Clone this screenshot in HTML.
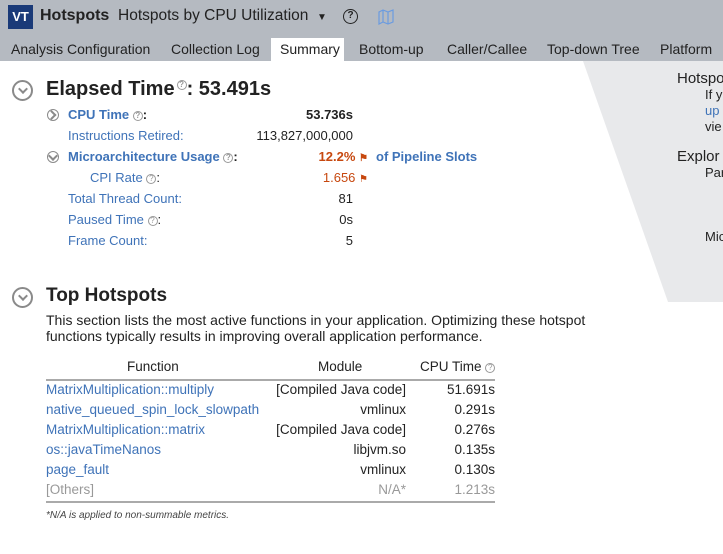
<!DOCTYPE html><html><head><meta charset="utf-8"><style>
*{margin:0;padding:0;box-sizing:border-box}
body{width:723px;height:554px;overflow:hidden;background:#fff;font-family:"Liberation Sans",sans-serif;color:#222;position:relative;font-size:13px}
.a{position:absolute;white-space:nowrap}
.l{color:#3f73b8}
.r{text-align:right}
.q{display:inline-block;width:10px;height:10px;border:1px solid #999;border-radius:50%;font-size:8px;line-height:8px;text-align:center;color:#999;vertical-align:1px}
.c{position:absolute;border:2px solid #8a8a8a;border-radius:50%}
.c:after{content:"";position:absolute;left:50%;top:40%;width:5px;height:5px;border-right:2px solid #8a8a8a;border-bottom:2px solid #8a8a8a;transform:translate(-50%,-50%) rotate(45deg)}
.cr:after{transform:translate(-70%,-50%) rotate(-45deg);top:50%}
.o{color:#c7480f}
.t{font-size:13.5px}
</style></head><body>
<div class="a" style="left:0;top:0;width:723px;height:61px;background:#b5bac1"></div>
<div class="a" style="left:8px;top:5px;width:25px;height:24px;background:#1a3a78;color:#fff;font-weight:bold;font-size:13px;line-height:24px;text-align:center">VT</div>
<div class="a" style="left:40px;top:7px;font-size:16px;font-weight:bold">Hotspots</div>
<div class="a" style="left:118px;top:7px;font-size:15.5px">Hotspots by CPU Utilization &nbsp;<span style="font-size:10px">▼</span></div>
<div class="a" style="left:343px;top:9px;width:15px;height:15px;border:1.5px solid #222;border-radius:50%;font-size:10px;line-height:12px;text-align:center;font-weight:bold">?</div>
<svg class="a" style="left:378px;top:9px" width="16" height="16"><path d="M1 3 L5 1 L10 3 L15 1 L15 13 L10 15 L5 13 L1 15 Z M5 1 V13 M10 3 V15" fill="none" stroke="#6a9be0" stroke-width="1.2"/></svg>
<div class="a" style="left:271px;top:38px;width:73px;height:23px;background:#fff"></div>
<div class="a" style="left:11px;top:41px;font-size:14px">Analysis Configuration</div>
<div class="a" style="left:171px;top:41px;font-size:14px">Collection Log</div>
<div class="a" style="left:280px;top:41px;font-size:14px">Summary</div>
<div class="a" style="left:359px;top:41px;font-size:14px">Bottom-up</div>
<div class="a" style="left:447px;top:41px;font-size:14px">Caller/Callee</div>
<div class="a" style="left:547px;top:41px;font-size:14px">Top-down Tree</div>
<div class="a" style="left:660px;top:41px;font-size:14px">Platform</div>
<svg class="a" style="left:0;top:61px" width="723" height="242"><polygon points="583,0 723,0 723,241 668,241" fill="#e8e9eb"/></svg>
<div class="a" style="left:677px;top:70px;font-size:15px">Hotspots</div>
<div class="a" style="left:705px;top:87px">If y</div>
<div class="a l" style="left:705px;top:103px">up</div>
<div class="a" style="left:705px;top:119px">vie</div>
<div class="a" style="left:677px;top:148px;font-size:15px">Explor</div>
<div class="a" style="left:705px;top:165px">Par</div>
<div class="a" style="left:705px;top:229px">Mic</div>

<div class="c" style="left:12px;top:80px;width:21px;height:21px"></div>
<div class="a" style="left:46px;top:78px;font-size:20px;font-weight:bold">Elapsed Time<span class="q" style="vertical-align:8px;margin-left:2px">?</span>: 53.491s</div>
<div class="c cr" style="left:47px;top:109px;width:12px;height:12px;border-width:1.5px"></div>
<div class="a l" style="left:68px;top:107px;font-weight:bold">CPU Time <span class="q">?</span><span style="color:#222">:</span></div>
<div class="a r" style="left:240px;width:113px;top:107px;font-weight:bold">53.736s</div>
<div class="a l" style="left:68px;top:128px">Instructions Retired:</div>
<div class="a r" style="left:200px;width:153px;top:128px">113,827,000,000</div>
<div class="c" style="left:47px;top:151px;width:12px;height:12px;border-width:1.5px"></div>
<div class="a l" style="left:68px;top:149px;font-weight:bold">Microarchitecture Usage <span class="q">?</span><span style="color:#222">:</span></div>
<div class="a r o" style="left:240px;width:128px;top:149px;font-weight:bold">12.2% <span style="font-size:10px">⚑</span></div>
<div class="a l" style="left:376px;top:149px;font-weight:bold">of Pipeline Slots</div>
<div class="a l" style="left:90px;top:170px">CPI Rate <span class="q">?</span><span style="color:#222">:</span></div>
<div class="a r o" style="left:240px;width:128px;top:170px">1.656 <span style="font-size:10px">⚑</span></div>
<div class="a l" style="left:68px;top:191px">Total Thread Count:</div>
<div class="a r" style="left:240px;width:113px;top:191px">81</div>
<div class="a l" style="left:68px;top:212px">Paused Time <span class="q">?</span><span style="color:#222">:</span></div>
<div class="a r" style="left:240px;width:113px;top:212px">0s</div>
<div class="a l" style="left:68px;top:233px">Frame Count:</div>
<div class="a r" style="left:240px;width:113px;top:233px">5</div>

<div class="c" style="left:12px;top:287px;width:21px;height:21px"></div>
<div class="a" style="left:46px;top:285px;font-size:19px;font-weight:bold">Top Hotspots</div>
<div class="a" style="left:46px;top:312px;font-size:14px">This section lists the most active functions in your application. Optimizing these hotspot</div>
<div class="a" style="left:46px;top:328px;font-size:14px">functions typically results in improving overall application performance.</div>
<div class="a t" style="left:127px;top:359px">Function</div>
<div class="a t" style="left:318px;top:359px">Module</div>
<div class="a t" style="left:420px;top:359px">CPU Time <span class="q">?</span></div>
<div class="a" style="left:46px;top:379px;width:449px;height:2px;background:#aaa"></div>
<div class="a" style="left:46px;top:501px;width:449px;height:2px;background:#aaa"></div>
<div class="a l t" style="left:46px;top:382px">MatrixMultiplication::multiply</div>
<div class="a r t" style="left:250px;width:156px;top:382px">[Compiled Java code]</div>
<div class="a r t" style="left:410px;width:85px;top:382px">51.691s</div>
<div class="a l t" style="left:46px;top:402px">native_queued_spin_lock_slowpath</div>
<div class="a r t" style="left:250px;width:156px;top:402px">vmlinux</div>
<div class="a r t" style="left:410px;width:85px;top:402px">0.291s</div>
<div class="a l t" style="left:46px;top:422px">MatrixMultiplication::matrix</div>
<div class="a r t" style="left:250px;width:156px;top:422px">[Compiled Java code]</div>
<div class="a r t" style="left:410px;width:85px;top:422px">0.276s</div>
<div class="a l t" style="left:46px;top:442px">os::javaTimeNanos</div>
<div class="a r t" style="left:250px;width:156px;top:442px">libjvm.so</div>
<div class="a r t" style="left:410px;width:85px;top:442px">0.135s</div>
<div class="a l t" style="left:46px;top:462px">page_fault</div>
<div class="a r t" style="left:250px;width:156px;top:462px">vmlinux</div>
<div class="a r t" style="left:410px;width:85px;top:462px">0.130s</div>
<div class="a t" style="left:46px;top:482px;color:#999">[Others]</div>
<div class="a r t" style="left:250px;width:156px;top:482px;color:#999">N/A*</div>
<div class="a r t" style="left:410px;width:85px;top:482px;color:#999">1.213s</div>
<div class="a" style="left:46px;top:510px;font-size:10px;font-style:italic;color:#444">*N/A is applied to non-summable metrics.</div>
</body></html>
